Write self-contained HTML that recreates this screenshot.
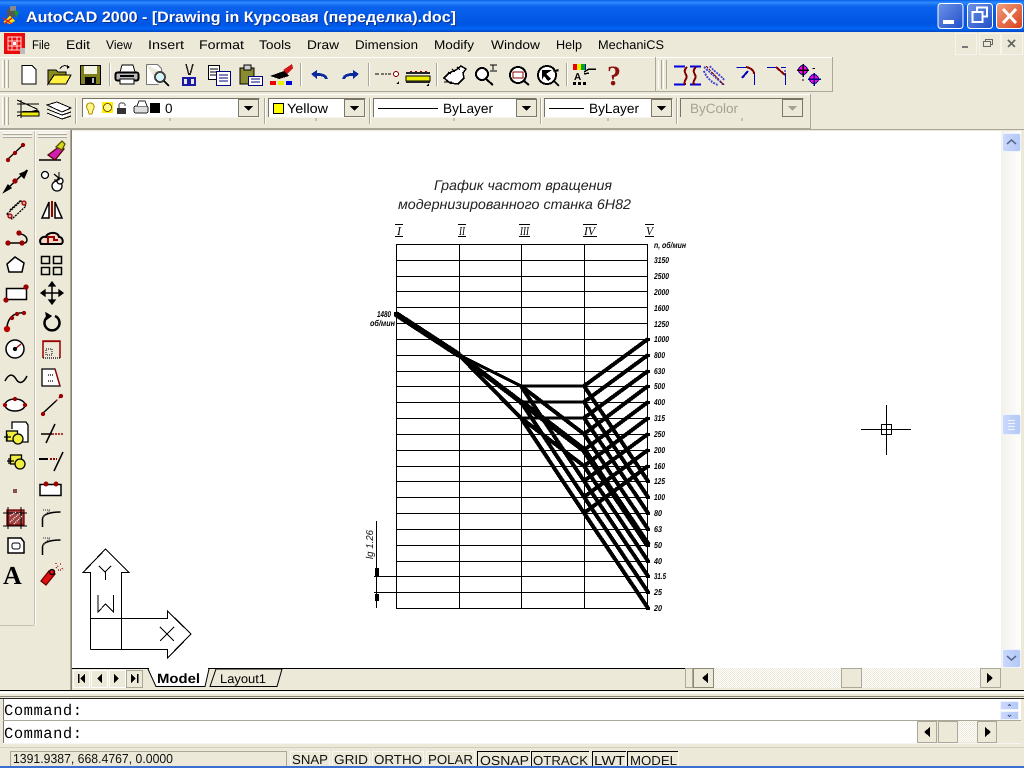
<!DOCTYPE html>
<html><head><meta charset="utf-8"><title>AutoCAD 2000</title>
<style>
html,body{margin:0;padding:0;width:1024px;height:768px;overflow:hidden;background:#ece9d8}
svg{display:block;font-family:"Liberation Sans","Noto Sans CJK SC",sans-serif;text-rendering:geometricPrecision}
.m{font-size:12.500px;fill:#000}
.c{font-size:13.500px;fill:#000}
.g{font-size:13.500px;fill:#a5a294}
.s{font-size:13px;fill:#111}
.n{font-size:8.500px;font-style:italic;font-weight:bold;fill:#000}
.t{font-size:14px;font-style:italic;fill:#222;font-weight:normal}
.r{font-family:"Liberation Serif",serif;font-size:12px;font-style:italic;fill:#000}
.l{stroke:#000;fill:none;shape-rendering:crispEdges}
</style></head><body>
<svg width="1024" height="768" viewBox="0 0 1024 768" xmlns="http://www.w3.org/2000/svg">
<defs>
<linearGradient id="tb" x1="0" y1="0" x2="0" y2="1">
<stop offset="0" stop-color="#0a5fe8"/><stop offset=".08" stop-color="#2f8cff"/><stop offset=".2" stop-color="#0a62ee"/><stop offset=".75" stop-color="#0055e3"/><stop offset=".9" stop-color="#0065f5"/><stop offset="1" stop-color="#0047c4"/></linearGradient>
<linearGradient id="bb" x1="0" y1="0" x2="1" y2="1"><stop offset="0" stop-color="#6d93e8"/><stop offset="1" stop-color="#1f4fc8"/></linearGradient>
<linearGradient id="rb" x1="0" y1="0" x2="1" y2="1"><stop offset="0" stop-color="#f0a080"/><stop offset="1" stop-color="#d8401a"/></linearGradient>
<linearGradient id="sb" x1="0" y1="0" x2="1" y2="0"><stop offset="0" stop-color="#f3f1ec"/><stop offset="1" stop-color="#fefefb"/></linearGradient>
<linearGradient id="bl" x1="0" y1="0" x2="1" y2="0"><stop offset="0" stop-color="#cbd9fb"/><stop offset="1" stop-color="#b3c8f7"/></linearGradient>
<pattern id="dz" width="2" height="2" patternUnits="userSpaceOnUse"><rect width="2" height="2" fill="#fff"/><rect width="1" height="1" fill="#ece9d8"/><rect x="1" y="1" width="1" height="1" fill="#ece9d8"/></pattern>
</defs>
<rect width="1024" height="768" fill="#ece9d8"/>

<!-- title bar -->
<rect width="1024" height="32" fill="url(#tb)"/>
<g shape-rendering="crispEdges">
<rect x="7" y="9" width="8" height="8" fill="#555"/><rect x="10" y="6" width="6" height="5" fill="#888"/>
<path d="M3 22l7-6 5 5-5 3z" fill="#ffe000"/><path d="M14 10l5 2-3 6z" fill="#1a9a2a"/><path d="M3 18l9 6M12 18l-8 6" stroke="#e02020" stroke-width="1.500" fill="none"/>
</g>
<text x="27" y="23" font-size="15" font-weight="bold" fill="#0a2f90" textLength="430" lengthAdjust="spacingAndGlyphs">AutoCAD 2000 - [Drawing in Курсовая (переделка).doc]</text>
<text x="26" y="22" font-size="15" font-weight="bold" fill="#fff" textLength="430" lengthAdjust="spacingAndGlyphs">AutoCAD 2000 - [Drawing in Курсовая (переделка).doc]</text>
<rect x="938" y="3.500" width="25" height="25" rx="3" fill="url(#bb)" stroke="#fff"/>
<rect x="943" y="20" width="11" height="4" fill="#fff"/>
<rect x="967.500" y="3.500" width="25" height="25" rx="3" fill="url(#bb)" stroke="#fff"/>
<path d="M977 11v-3.500h10v9h-3.500" fill="none" stroke="#fff" stroke-width="2"/><rect x="972.500" y="12" width="10" height="10" fill="none" stroke="#fff" stroke-width="2"/>
<rect x="996.500" y="3.500" width="26" height="25" rx="3" fill="url(#rb)" stroke="#fff"/>
<path d="M1003 9l13 14M1016 9l-13 14" stroke="#fff" stroke-width="3" fill="none"/>

<!-- menu -->
<g shape-rendering="crispEdges">
<rect x="4" y="33" width="21" height="21" fill="#ea0a0a"/>
<path d="M8 37h13v13H8zM12 37v13M17 37v13M8 41h13M8 46h13" stroke="#ffd8d8" fill="none"/>
<rect x="13" y="42" width="3" height="3" fill="#fff"/><rect x="20" y="48" width="5" height="6" fill="#bbb"/>
</g>
<text class="m" x="32" y="49" textLength="18" lengthAdjust="spacingAndGlyphs">File</text>
<text class="m" x="66" y="49" textLength="24" lengthAdjust="spacingAndGlyphs">Edit</text>
<text class="m" x="106" y="49" textLength="26" lengthAdjust="spacingAndGlyphs">View</text>
<text class="m" x="148" y="49" textLength="36" lengthAdjust="spacingAndGlyphs">Insert</text>
<text class="m" x="199" y="49" textLength="45" lengthAdjust="spacingAndGlyphs">Format</text>
<text class="m" x="259" y="49" textLength="32" lengthAdjust="spacingAndGlyphs">Tools</text>
<text class="m" x="307" y="49" textLength="32" lengthAdjust="spacingAndGlyphs">Draw</text>
<text class="m" x="355" y="49" textLength="63" lengthAdjust="spacingAndGlyphs">Dimension</text>
<text class="m" x="434" y="49" textLength="40" lengthAdjust="spacingAndGlyphs">Modify</text>
<text class="m" x="491" y="49" textLength="49" lengthAdjust="spacingAndGlyphs">Window</text>
<text class="m" x="556" y="49" textLength="26" lengthAdjust="spacingAndGlyphs">Help</text>
<text class="m" x="598" y="49" textLength="66" lengthAdjust="spacingAndGlyphs">MechaniCS</text>
<g shape-rendering="crispEdges">
<rect x="955.500" y="33.500" width="21" height="21" fill="#ece9d8" stroke="#f6f4ec"/><rect x="962" y="46" width="6" height="2" fill="#777"/>
<rect x="979.500" y="33.500" width="21" height="21" fill="#ece9d8" stroke="#f6f4ec"/><path d="M985.500 41.500v-2h7v5h-2M983.500 41.500h7v5h-7z" fill="none" stroke="#666"/>
<rect x="1001.500" y="33.500" width="21" height="21" fill="#ece9d8" stroke="#f6f4ec"/><path d="M1008 40l7 7M1015 40l-7 7" stroke="#666" stroke-width="2"/>
</g>

<!-- toolbar frames -->
<g shape-rendering="crispEdges" fill="none">
<path d="M0 57.500H655M0 94.500H810" stroke="#fff"/>
<path d="M655.500 57v35M0 91.500H655M810.500 94v35M0 128.500H810" stroke="#a9a797"/>
<path d="M656 57.500H833" stroke="#fff"/><path d="M832.500 57v35M655 91.500H833" stroke="#a9a797"/>
<path d="M2.500 60v28M6.500 60v28M2.500 97v28M6.500 97v28" stroke="#fff"/><path d="M4.500 60v28M8.500 60v28M4.500 97v28M8.500 97v28" stroke="#a9a797"/>
<path d="M658.500 60v29M663.500 60v29" stroke="#fff"/><path d="M661.500 60v29M666.500 60v29" stroke="#a9a797"/>
<path d="M109.500 63v23M300.500 63v23M368.500 63v23M436.500 63v23M566.500 63v23" stroke="#a9a797"/>
<path d="M110.500 63v23M301.500 63v23M369.500 63v23M437.500 63v23M567.500 63v23" stroke="#fff"/>
<path d="M75.500 98v26M264.500 98v26M369.500 98v26M540.500 98v26M676.500 98v26" stroke="#a9a797"/>
<path d="M76.500 98v26M265.500 98v26M370.500 98v26M541.500 98v26M677.500 98v26" stroke="#fff"/>
<path d="M0 129.500H1024" stroke="#aca899"/>
</g>

<!-- toolbar1 icons -->
<g shape-rendering="crispEdges">
<path d="M22 65.500h10l4 4v14.500H22z" fill="#fff" stroke="#000"/>
<path d="M48 84V70h8l2 2h8v3H54l-6 9z" fill="#8a8a20" stroke="#000"/><path d="M48 84l6-9h17l-5 9z" fill="#ffef40" stroke="#000"/><path d="M60 69c2-4 6-4 9-2" fill="none" stroke="#000"/><path d="M67 65l3 2-3 2z"/>
<rect x="80.500" y="65.500" width="20" height="19" fill="#7f7f20" stroke="#000"/><rect x="84" y="66" width="13" height="8" fill="#f2f2e0"/><rect x="85" y="77" width="11" height="7" fill="#000"/><rect x="92" y="78" width="2" height="5" fill="#bbb"/>
<path d="M120 72l2-7h11l2 7" fill="#fff" stroke="#000"/><rect x="115.500" y="72.500" width="23" height="8" rx="2" fill="#bbb" stroke="#000" stroke-width="2"/><rect x="120" y="79" width="14" height="5" fill="#fff" stroke="#000"/><rect x="120" y="75" width="14" height="2" fill="#000"/>
<path d="M146.500 64.500h11l4 4v4M146.500 64.500v20h12" fill="#fff" stroke="#777"/><circle cx="160" cy="77" r="5" fill="#d5f5f8" stroke="#444" stroke-width="2"/><path d="M164 81l5 5" stroke="#000" stroke-width="2"/>
<path d="M186 64l3 11M193 64l-3 11" stroke="#222" stroke-width="1.500"/><rect x="183" y="78" width="5" height="7" fill="none" stroke="#1a1aa8" stroke-width="2"/><rect x="190" y="78" width="5" height="7" fill="none" stroke="#1a1aa8" stroke-width="2"/>
<rect x="208.500" y="65.500" width="11" height="14" fill="#fff" stroke="#000"/><path d="M210 69h8M210 72h8M210 75h8" stroke="#000"/><rect x="216.500" y="71.500" width="14" height="14" fill="#fff" stroke="#00007f"/><path d="M219 75h9M219 78h9M219 81h9" stroke="#00007f"/>
<rect x="240" y="68" width="14" height="16" fill="#8a8a30" stroke="#000"/><rect x="244" y="65" width="7" height="5" fill="#ccc" stroke="#000"/><rect x="248.500" y="76.500" width="14" height="9" fill="#fff" stroke="#00007f"/><path d="M251 79h9M251 82h9" stroke="#00007f"/>
<path d="M270 76l14-5 5 5-10 3z"/><path d="M283 70l9-6 1 4-6 6z" fill="#d01818"/><rect x="270" y="81" width="6" height="4" fill="#e00"/><rect x="278" y="81" width="6" height="4" fill="#ee0"/><rect x="286" y="81" width="6" height="4" fill="#00d"/>
<path d="M311 74l6-4v3c5 0 10 1 11 6h-3c-1-3-4-3-8-3v3z" fill="#0a2aa0"/>
<path d="M359 74l-6-4v3c-5 0-10 1-11 6h3c1-3 4-3 8-3v3z" fill="#0a2aa0"/>
<path d="M375 74h4M381 74h3M385 74h2M388 74h3" stroke="#000"/><circle cx="396" cy="74" r="2.500" fill="#fff" stroke="#900"/><path d="M396 84h3v-3z"/>
<rect x="406" y="72" width="24" height="2" fill="#222"/><path d="M410 71.500h2M415 71.500h2M420 71.500h2M425 71.500h2" stroke="#900"/><rect x="406" y="76" width="24" height="5" fill="#ee0" stroke="#000"/><rect x="406" y="81" width="24" height="2" fill="#222"/><path d="M426 86h3v-3z"/>
<path d="M444 78l5-5 7-3 5-4 5 3-3 4 1 5-6 6-8-1z" fill="#fff" stroke="#000" stroke-width="1.500"/><path d="M448 72l3 2M452 69l3 3M457 67l3 3M444 82h8" stroke="#000"/>
<circle cx="482" cy="74" r="6" fill="#fff" stroke="#000" stroke-width="2"/><path d="M486 79l7 6" stroke="#000" stroke-width="2"/><path d="M490 71h7M493 65v5M490 65h7" stroke="#000"/>
<circle cx="518" cy="75" r="8" fill="#fff" stroke="#000" stroke-width="2"/><rect x="513" y="72" width="10" height="6" fill="none" stroke="#800"/><path d="M524 81l5 4" stroke="#000" stroke-width="2"/>
<circle cx="547" cy="75" r="9" fill="#fff" stroke="#000" stroke-width="2"/><path d="M542 70h10l-6 4 5 5-3 2-4-5-2 4z"/><path d="M554 81l5 5" stroke="#000" stroke-width="2"/><path d="M553 71h5v-2" stroke="#000"/>
<rect x="573" y="64" width="4" height="6" fill="#e00"/><rect x="577" y="64" width="4" height="6" fill="#ee0"/><rect x="581" y="64" width="4" height="6" fill="#0a0"/><rect x="585" y="64" width="1" height="6" fill="#00d"/><text x="574" y="80" font-size="10" font-weight="bold" fill="#000">A</text><path d="M584 72l5-3h7M584 74l5-1" stroke="#000" stroke-width="1.500" fill="none"/><rect x="573" y="82" width="3" height="3"/><rect x="578" y="82" width="3" height="3"/><rect x="583" y="82" width="3" height="3"/>
<text x="607" y="85" font-size="28" font-weight="bold" fill="#8a1010" font-family="Liberation Serif">?</text>
</g>
<!-- mechanics icons -->
<g shape-rendering="crispEdges" fill="none">
<path d="M674 66.500h11M674 84.500h11M690 66.500h11M690 84.500h11" stroke="#0000e0" stroke-width="2"/>
<path d="M687 67c-6 6 2 7-1 12s-1 5 0 5M696 67c-6 6 2 7-1 12s-1 5 0 5" stroke="#800000" stroke-width="2"/>
<path d="M704 67l20 18M710 66c3 5 12 10 14 14M704 71c2 6 8 12 14 14" stroke="#4a4ad8" stroke-width="2" stroke-dasharray="2 1"/>
<path d="M706 66l18 19" stroke="#800000" stroke-dasharray="3 1"/>
<path d="M736.500 67.500h10M754.500 85v-12" stroke="#0000c0"/><path d="M746 67c5 1 8 3 8 7" stroke="#800000" stroke-width="2"/><path d="M742 78l6-7" stroke="#0000c0" stroke-width="2"/>
<path d="M767 67.500h10M785.500 85v-12" stroke="#0000c0"/><path d="M776 67l9 8" stroke="#800000" stroke-width="2"/><path d="M781 67.500h5M785 70v2" stroke="#0000c0"/>
<circle cx="803" cy="70" r="4.500" fill="#ff00e0" stroke="#000080"/><path d="M803 64v13M797 70h12" stroke="#000" stroke-width="1.500"/>
<circle cx="814" cy="79" r="4.500" fill="#ff00e0" stroke="#000080"/><path d="M814 73v13M808 79h13" stroke="#00008a" stroke-width="1.500"/>
<path d="M813 68.500h2M813 68v1M802 80h2" stroke="#000"/>
</g>

<!-- toolbar2 -->
<g shape-rendering="crispEdges">
<path d="M17 100l20 9v1l-20 6M17 104h22M17 112l22-1M21 100v18" fill="none" stroke="#000"/><rect x="21" y="112" width="18" height="4" fill="#eeea10" stroke="#000"/>
<path d="M47 105l10-3 14 6-9 4zM47 109l15 6 9-3M47 113l15 6 9-3" fill="#fff" stroke="#000"/>
</g>
<g shape-rendering="crispEdges">
<g fill="#fff">
<rect x="82.500" y="98.500" width="177" height="19"/><rect x="268.500" y="98.500" width="97" height="19"/><rect x="373.500" y="98.500" width="163" height="19"/><rect x="544.500" y="98.500" width="128" height="19"/>
</g>
<rect x="680.500" y="98.500" width="123" height="19" fill="#ece9d8"/>
<g fill="none" stroke="#777467">
<path d="M82.500 117V98.500H259.500"/><path d="M268.500 117V98.500H365.500"/><path d="M373.500 117V98.500H536.500"/><path d="M544.500 117V98.500H672.500"/><path d="M680.500 117V98.500H803.500"/>
</g>
<g fill="#ece9d8" stroke="#7a7868">
<rect x="238.500" y="99.500" width="20" height="17"/><rect x="344.500" y="99.500" width="20" height="17"/><rect x="516.500" y="99.500" width="20" height="17"/><rect x="651.500" y="99.500" width="20" height="17"/><rect x="782.500" y="99.500" width="20" height="17"/>
</g>
<path d="M244 106h9l-4.500 5zM350 106h9l-4.500 5zM522 106h9l-4.500 5zM657 106h9l-4.500 5z"/>
<path d="M788 106h9l-4.500 5z" fill="#a5a294"/>
<path d="M170 118v3M316 118v3M454 118v3M608 118v3M742 118v3" stroke="#999"/>
<path d="M90 103c-4 0-4 5-2 7l1 4h3l1-4c2-2 2-7-3-7z" fill="#fff58a" stroke="#b09000"/>
<rect x="102" y="102" width="11" height="11" fill="#fff000"/><circle cx="107.500" cy="107.500" r="4" fill="#fff88a" stroke="#806000"/>
<rect x="117" y="108" width="9" height="6" fill="#333"/><path d="M119 108v-3c0-3 6-3 6 0v1" fill="none" stroke="#333"/>
<rect x="134" y="106" width="14" height="7" rx="2" fill="#ddd" stroke="#222"/><path d="M137 106l2-5h6l2 5" fill="#fff" stroke="#222"/>
<rect x="150" y="103" width="10" height="10"/>
<text class="c" x="165" y="113">0</text>
<rect x="273.500" y="103.500" width="10" height="10" fill="#ff0" stroke="#000"/>
<text class="c" x="287" y="113" textLength="41" lengthAdjust="spacingAndGlyphs">Yellow</text>
<path d="M378 108.500h60M549 108.500h35" stroke="#000"/>
<text class="c" x="443" y="113" textLength="50" lengthAdjust="spacingAndGlyphs">ByLayer</text>
<text class="c" x="589" y="113" textLength="50" lengthAdjust="spacingAndGlyphs">ByLayer</text>
<text class="g" x="690" y="113" textLength="48" lengthAdjust="spacingAndGlyphs">ByColor</text>
</g>

<!-- left palette -->
<g shape-rendering="crispEdges">
<path d="M0 625.500H34M34.500 130V625" stroke="#c5c2b0" fill="none"/>
<path d="M70.500 130V690" stroke="#aca899" fill="none"/>
<path d="M35.500 130V625M0 130.500H70" stroke="#fff" fill="none"/>
<rect x="3" y="132" width="29" height="2" fill="#f7f6f0"/><rect x="3" y="134" width="29" height="1" fill="#aca899"/><rect x="3" y="136" width="29" height="1" fill="#f7f6f0"/><rect x="3" y="137" width="29" height="1" fill="#aca899"/>
<rect x="38" y="132" width="29" height="2" fill="#f7f6f0"/><rect x="38" y="134" width="29" height="1" fill="#aca899"/><rect x="38" y="136" width="29" height="1" fill="#f7f6f0"/><rect x="38" y="137" width="29" height="1" fill="#aca899"/>
<rect x="71" y="130" width="1" height="560" fill="#85836f"/>
</g>
<g fill="none" stroke="#000" stroke-width="1.300">
<path d="M7 160l16-15"/><circle cx="8" cy="160" r="1.500" fill="#900" stroke="#900"/><circle cx="15" cy="153" r="1.500" fill="#900" stroke="#900"/><circle cx="23" cy="145" r="1.500" fill="#900" stroke="#900"/>
<path d="M5 191l22-21" stroke-width="1.500"/><path d="M4 192l4-7 3 3zM27 171l-3 7-4-4z" fill="#000"/><circle cx="15" cy="181" r="2" fill="#900" stroke="#900"/>
<path d="M7 214l14-13 5 5-14 13zM10 210l11-10" stroke-dasharray="2 1"/><circle cx="10" cy="216" r="2" fill="#e8a0a0" stroke="#900"/><circle cx="24" cy="203" r="2" fill="#e8a0a0" stroke="#900"/>
<path d="M7 243h17c5 0 4-9-5-9" stroke-width="1.500"/><circle cx="8" cy="243" r="2" fill="#900" stroke="#900"/><circle cx="22" cy="243" r="2" fill="#900" stroke="#900"/><circle cx="19" cy="233" r="2" fill="#900" stroke="#900"/>
<path d="M15 257l9 6-2 9H9l-2-8z" fill="#fff" stroke-width="1.500"/>
<rect x="6.500" y="288.500" width="20" height="11" fill="#fff" stroke-width="1.500"/><circle cx="26" cy="287" r="2" fill="#900" stroke="#900"/><circle cx="6" cy="300" r="2" fill="#900" stroke="#900"/>
<path d="M7 327c1-10 8-15 17-14" stroke-width="1.500"/><circle cx="7" cy="329" r="2.500" fill="#b00" stroke="#b00"/><circle cx="12" cy="318" r="1.500" fill="#900" stroke="#900"/><circle cx="17" cy="314" r="1.500" fill="#900" stroke="#900"/><circle cx="24" cy="313" r="1.500" fill="#900" stroke="#900"/>
<circle cx="15" cy="349" r="9" fill="#fff" stroke-width="1.500"/><path d="M15 349l6-5" stroke="#900"/><circle cx="15" cy="349" r="1.500" fill="#000"/>
<path d="M5 381c4-8 8-7 11-2s7 5 11-3" stroke-width="1.500"/>
<ellipse cx="15" cy="405" rx="10" ry="6" fill="#fff" stroke-width="1.500"/><circle cx="5" cy="405" r="1.500" fill="#900" stroke="#900"/><circle cx="25" cy="405" r="1.500" fill="#900" stroke="#900"/><circle cx="15" cy="399" r="1.500" fill="#900" stroke="#900"/>
<path d="M12 429v-7h14l2 3v17h-6" fill="#fff"/><rect x="6.500" y="431" width="11" height="10" fill="#f0ee40" stroke="#000"/><circle cx="18" cy="439" r="5" fill="#f0ee40"/><path d="M4 437h7M7 434v7"/>
<rect x="10.500" y="455" width="11" height="9" fill="#f0ee40"/><circle cx="20" cy="464" r="5" fill="#f0ee40"/><path d="M7 461h7M9 458v6"/>
<rect x="13" y="489" width="4" height="4" fill="#8a5050" stroke="none"/>
<rect x="7" y="510" width="17" height="15" fill="#a04040" stroke="#700"/><path d="M3 513h24M3 526h24M8 507v22M21 507v22" stroke-width="1"/><path d="M10 522l10-9M10 516l6-4M14 524l8-8" stroke="#fff" stroke-dasharray="1 1"/>
<path d="M8 538h13l3 4v11H8z" fill="#fff" stroke-width="1.500"/><rect x="12" y="543" width="8" height="6" rx="2" stroke-width="1"/>
</g>
<text x="3" y="584" font-size="26" font-weight="bold" font-family="Liberation Serif" fill="#000">A</text>
<g fill="none" stroke="#000" stroke-width="1.300">
<path d="M39 160h22" stroke-width="1.500"/><path d="M48 155l12-9 4 3-9 11z" fill="#d020b0" stroke="#500"/><path d="M56 147l6-6 3 3-3 6z" fill="#d8d820" stroke="#550"/>
<circle cx="45" cy="175" r="3.500" fill="#fff"/><circle cx="57" cy="186" r="5" fill="#fff"/><circle cx="60" cy="181" r="3" fill="#fff"/><path d="M54 174l6 5"/><path d="M59 172v8h-5" stroke-width="1"/>
<path d="M52 201v16" stroke="#900" stroke-width="2"/><path d="M49 202v16h-7zM55 202v16h7z" fill="#fff" stroke-width="1.500"/>
<path d="M41 244c-3-5 2-8 5-7 1-5 12-6 13 0 4 0 5 6 2 7z" stroke-width="2" fill="#f2d8c8"/><path d="M48 243v-6h6v3h4" stroke="#900" stroke-width="2"/>
<rect x="41.500" y="256.500" width="8" height="7" stroke-width="1.500"/><rect x="53.500" y="256.500" width="8" height="7" stroke-width="1.500"/><rect x="41.500" y="267.500" width="8" height="7" stroke-width="1.500"/><rect x="53.500" y="267.500" width="8" height="7" stroke-width="1.500"/>
<path d="M52 283v20M42 293h20" stroke-width="1.500"/><path d="M52 282l-3 4h6zM52 304l-3-4h6zM41 293l4-3v6zM63 293l-4-3v6z" fill="#000"/>
<path d="M49 316a7.500 7.500 0 1 0 6 0" stroke-width="2.500"/><path d="M46 313l5 3-4 3z" fill="#000"/>
<path d="M43 358v-17h17v17" stroke="#900" stroke-width="1.500"/><path d="M43.500 341.500h17" stroke="#900"/><path d="M46 349h6v6h-6z" stroke-width="1" stroke-dasharray="1 1"/><path d="M43 358h17" stroke="#000" stroke-dasharray="1 1"/>
<path d="M42 369v17h18l-5-17z" fill="#fff"/><path d="M55 369l5 17" stroke="#900"/><path d="M48 375h5M48 381h5" stroke-dasharray="1 1"/>
<path d="M42 414l14-13" stroke-width="1.500"/><path d="M56 401l6-6" stroke="#900" stroke-dasharray="2 2"/><circle cx="43" cy="414" r="1.500" fill="#900" stroke="#900"/><circle cx="61" cy="396" r="1.500" fill="#900" stroke="#900"/>
<path d="M46 443l9-19M41 434h11" stroke-width="1.500"/><path d="M52 434h11" stroke="#900" stroke-dasharray="2 1" stroke-width="1.500"/>
<path d="M39 459h9" stroke-width="2"/><path d="M50 459h7" stroke="#900" stroke-dasharray="2 1" stroke-width="2"/><path d="M54 471l9-19" stroke-width="1.500"/>
<rect x="40" y="484.500" width="21" height="11" fill="#fff" stroke-width="1.500"/><circle cx="46" cy="484" r="1.800" fill="#900" stroke="#900"/><circle cx="56" cy="484" r="1.800" fill="#900" stroke="#900"/>
<path d="M42.500 527v-8c0-4 6-7 18-7" stroke-width="1.500"/><path d="M43 510h7l-7 7" stroke-dasharray="1 1" stroke="#555"/>
<path d="M42.500 555v-8c0-4 6-7 18-7" stroke-width="1.500"/><path d="M43 538h7l-7 7" stroke-dasharray="1 1" stroke="#555"/>
<path d="M41 581l8-10 6 3-9 11z" fill="#e01010" stroke="#600"/><circle cx="52" cy="572" r="2.500" stroke="#000" fill="#e01010"/><path d="M56 568l2-2M60 564h2M58 570h3M62 568l1 2M56 564v-1" stroke="#900" stroke-dasharray="1 1"/>
</g>

<!-- canvas -->
<rect x="72" y="131" width="929" height="537" fill="#fff"/>
<!-- drawing -->
<g class="l" stroke-width="1.400">
<path d="M396.500 244V608.500M459.500 244V608.500M521.500 244V608.500M584.500 244V608.500M647.500 244V608.500"/>
<path d="M396 244.500H648M396 260.500H648M396 276.500H648M396 291.500H648M396 307.500H648M396 323.500H648M396 339.500H648M396 355.500H648M396 371.500H648M396 386.500H648M396 402.500H648M396 418.500H648M396 434.500H648M396 450.500H648M396 466.500H648M396 481.500H648M396 497.500H648M396 513.500H648M396 529.500H648M396 545.500H648M396 561.500H648M374 576.500H648M374 592.500H648M396 608.500H648"/>
</g>
<g class="l" stroke-width="4">
<path d="M396 314L459 355" stroke-width="6"/>
<path d="M459 355L521 386" stroke-width="3"/>
<path d="M459 355L521 418"/>
<path d="M459 355L521 402" stroke-width="5"/>
<path d="M521 386H584M521 402H584M521 418H584" stroke-width="3"/>
<path d="M521 386L584 434M521 386L584 481M521 402L584 497M521 418L584 466M521 418L584 513"/>
<path d="M521 402L584 450" stroke-width="6"/>
<path d="M584 386L648 339M584 402L648 355M584 418L648 371M584 434L648 386M584 450L648 402M584 466L648 418M584 481L648 434M584 497L648 450M584 513L648 466"/>
<path d="M584 386L648 481M584 402L648 497M584 418L648 513M584 434L648 529M584 450L648 545M584 466L648 561M584 481L648 576M584 497L648 592M584 513L648 608"/>
<path d="M584 450L648 545" stroke-width="6"/>
</g>
<g fill="#000" shape-rendering="crispEdges">
<rect x="646" y="338" width="4" height="3"/><rect x="646" y="354" width="4" height="3"/><rect x="646" y="370" width="4" height="3"/><rect x="646" y="385" width="4" height="3"/><rect x="646" y="401" width="4" height="3"/><rect x="646" y="417" width="4" height="3"/><rect x="646" y="433" width="4" height="3"/><rect x="646" y="449" width="4" height="3"/><rect x="646" y="465" width="4" height="3"/><rect x="646" y="480" width="4" height="3"/><rect x="646" y="496" width="4" height="3"/><rect x="646" y="512" width="4" height="3"/><rect x="646" y="528" width="4" height="3"/><rect x="646" y="544" width="4" height="3"/><rect x="646" y="560" width="4" height="3"/><rect x="646" y="575" width="4" height="3"/><rect x="646" y="591" width="4" height="3"/><rect x="646" y="607" width="4" height="3"/><rect x="394" y="312" width="3" height="4"/>
</g>
<text class="t" x="434" y="190" textLength="178" lengthAdjust="spacingAndGlyphs">График частот вращения</text>
<text class="t" x="398" y="209" textLength="233" lengthAdjust="spacingAndGlyphs">модернизированного станка 6Н82</text>
<g class="l"><path d="M395 224.500h8M395 236.500h8M458 224.500h8M458 236.500h8M519 224.500h11M519 236.500h11M583 224.500h14M583 236.500h14M645 224.500h9M645 236.500h9"/></g>
<text class="r" x="397" y="235">I</text><text class="r" x="459" y="235" textLength="6" lengthAdjust="spacingAndGlyphs">II</text><text class="r" x="520" y="235" textLength="9" lengthAdjust="spacingAndGlyphs">III</text><text class="r" x="584" y="235" textLength="11" lengthAdjust="spacingAndGlyphs">IV</text><text class="r" x="646" y="235" textLength="7" lengthAdjust="spacingAndGlyphs">V</text>
<g>
<text class="n" x="654" y="248" textLength="32" lengthAdjust="spacingAndGlyphs">n, об/мин</text>
<text class="n" x="654" y="263" textLength="15" lengthAdjust="spacingAndGlyphs">3150</text>
<text class="n" x="654" y="279" textLength="15" lengthAdjust="spacingAndGlyphs">2500</text>
<text class="n" x="654" y="295" textLength="15" lengthAdjust="spacingAndGlyphs">2000</text>
<text class="n" x="654" y="311" textLength="15" lengthAdjust="spacingAndGlyphs">1600</text>
<text class="n" x="654" y="327" textLength="15" lengthAdjust="spacingAndGlyphs">1250</text>
<text class="n" x="654" y="342" textLength="15" lengthAdjust="spacingAndGlyphs">1000</text>
<text class="n" x="654" y="358" textLength="11" lengthAdjust="spacingAndGlyphs">800</text>
<text class="n" x="654" y="374" textLength="11" lengthAdjust="spacingAndGlyphs">630</text>
<text class="n" x="654" y="389" textLength="11" lengthAdjust="spacingAndGlyphs">500</text>
<text class="n" x="654" y="405" textLength="11" lengthAdjust="spacingAndGlyphs">400</text>
<text class="n" x="654" y="421" textLength="11" lengthAdjust="spacingAndGlyphs">315</text>
<text class="n" x="654" y="437" textLength="11" lengthAdjust="spacingAndGlyphs">250</text>
<text class="n" x="654" y="453" textLength="11" lengthAdjust="spacingAndGlyphs">200</text>
<text class="n" x="654" y="469" textLength="11" lengthAdjust="spacingAndGlyphs">160</text>
<text class="n" x="654" y="484" textLength="11" lengthAdjust="spacingAndGlyphs">125</text>
<text class="n" x="654" y="500" textLength="11" lengthAdjust="spacingAndGlyphs">100</text>
<text class="n" x="654" y="516" textLength="8" lengthAdjust="spacingAndGlyphs">80</text>
<text class="n" x="654" y="532" textLength="8" lengthAdjust="spacingAndGlyphs">63</text>
<text class="n" x="654" y="548" textLength="8" lengthAdjust="spacingAndGlyphs">50</text>
<text class="n" x="654" y="564" textLength="8" lengthAdjust="spacingAndGlyphs">40</text>
<text class="n" x="654" y="579" textLength="12" lengthAdjust="spacingAndGlyphs">31.5</text>
<text class="n" x="654" y="595" textLength="8" lengthAdjust="spacingAndGlyphs">25</text>
<text class="n" x="654" y="611" textLength="8" lengthAdjust="spacingAndGlyphs">20</text>
<text class="n" x="377" y="317" textLength="14" lengthAdjust="spacingAndGlyphs">1480</text>
<text class="n" x="370" y="326" textLength="25" lengthAdjust="spacingAndGlyphs">об/мин</text>
<text font-size="10" font-style="italic" fill="#111" transform="translate(373,559) rotate(-90)" textLength="29" lengthAdjust="spacingAndGlyphs">lg 1.26</text>
</g>
<g class="l"><path d="M376.500 521V608"/></g>
<path d="M375 568h4v8h-4zM375 594h4v7h-4z" fill="#000" shape-rendering="crispEdges"/>

<!-- UCS -->
<g class="l" stroke-width="1.200">
<path d="M90.500 649.500V572.500H83L105.500 549L129 572.500H121.500V649.500M90.500 649.500H167.500V658L191 634L167.500 611V618.500H90.500M121.500 618.500V649.500"/>
<path d="M99 566l6 6 6-6M105.500 572v8M98 595v17l7.500-8 8 8v-17M160 627l14 14M174 627l-14 14" stroke-width="1"/>
</g>
<!-- crosshair -->
<g class="l" stroke-width="1.300"><path d="M861 429.500H911M886.500 405V455"/><rect x="881.500" y="424.500" width="10" height="10"/></g>

<!-- right scrollbar -->
<rect x="1001" y="131" width="20" height="537" fill="url(#sb)"/>
<rect x="1021" y="131" width="3" height="537" fill="#ece9d8"/>
<rect x="1002.500" y="133.500" width="18" height="18" rx="2" fill="url(#bl)" stroke="#eef3ff"/>
<path d="M1007 144l4.500-4 4.500 4" fill="none" stroke="#4d6185" stroke-width="1.500"/>
<rect x="1002.500" y="414.500" width="18" height="20" rx="2" fill="url(#bl)" stroke="#eef3ff"/>
<path d="M1008 420.500h7M1008 423.500h7M1008 426.500h7M1008 429.500h7" stroke="#eef3ff" shape-rendering="crispEdges"/>
<rect x="1002.500" y="649.500" width="18" height="18" rx="2" fill="url(#bl)" stroke="#eef3ff"/>
<path d="M1007 656l4.500 4 4.500-4" fill="none" stroke="#4d6185" stroke-width="1.500"/>

<!-- tab bar -->
<rect x="72" y="669" width="952" height="21" fill="#ece9d8"/>
<g shape-rendering="crispEdges">
<path d="M72 668.500H685" stroke="#000"/>
<rect x="73.500" y="670.500" width="16" height="17" fill="#ece9d8" stroke="#fff"/><rect x="91.500" y="670.500" width="16" height="17" fill="#ece9d8" stroke="#fff"/><rect x="109.500" y="670.500" width="16" height="17" fill="#ece9d8" stroke="#fff"/><rect x="126.500" y="670.500" width="16" height="17" fill="#ece9d8" stroke="#aca899"/>
<path d="M78.500 674v9" stroke="#000" stroke-width="1.500"/><path d="M85 674v9l-5-4.500zM102 674v9l-5-4.500zM114 674v9l5-4.500zM131 674v9l5-4.500z"/><path d="M137.500 674v9" stroke="#000" stroke-width="1.500"/>
</g>
<path d="M148 669l8 17.500h49l4-17.500" fill="#fff" stroke="#000"/>
<path d="M210 686.500l6-17.500h66l-5 17.500z" fill="#ece9d8" stroke="#000"/>
<rect x="149" y="667.500" width="59" height="2" fill="#fff"/>
<text x="157" y="683" font-size="13.500" font-weight="bold" fill="#000" textLength="43" lengthAdjust="spacingAndGlyphs">Model</text>
<text x="220" y="683" font-size="12.500" fill="#000" textLength="46" lengthAdjust="spacingAndGlyphs">Layout1</text>
<!-- hscroll -->
<rect x="714" y="668" width="266" height="20" fill="url(#dz)"/>
<g shape-rendering="crispEdges">
<rect x="685.500" y="668.500" width="7" height="19" fill="#ece9d8" stroke="#aca899"/>
<rect x="693.500" y="668.500" width="20" height="19" fill="#ece9d8" stroke="#8a8875"/>
<path d="M708 673v10l-6-5z"/>
<rect x="841.500" y="668.500" width="20" height="19" fill="#ece9d8" stroke="#aca899"/>
<rect x="980.500" y="668.500" width="20" height="19" fill="#ece9d8" stroke="#aca899"/>
<path d="M987 673v10l6-5z"/>
<path d="M0 690.500H1024" stroke="#000"/><path d="M0 692.500H1024" stroke="#fff" stroke-width="2"/>
<path d="M0 696.500H1024" stroke="#8a8875"/><path d="M0 698.500H1024" stroke="#222"/>
</g>
<!-- command area -->
<rect x="3" y="699" width="1018" height="44" fill="#fff"/>
<g shape-rendering="crispEdges">
<path d="M3.500 699V743" stroke="#777"/><path d="M3 720.500H1021" stroke="#aca899"/><path d="M3 743.500H1021" stroke="#f6f5ef"/><path d="M0 747.500H1024" stroke="#d0cebf"/>
<rect x="917" y="721" width="107" height="22" fill="#ece9d8"/>
<rect x="957" y="721" width="20" height="21" fill="url(#dz)"/>
<rect x="917.500" y="721.500" width="19" height="21" fill="#ece9d8" stroke="#aca899"/><rect x="938.500" y="721.500" width="19" height="21" fill="#ece9d8" stroke="#aca899"/><rect x="977.500" y="721.500" width="19" height="21" fill="#ece9d8" stroke="#aca899"/>
<path d="M930 727v10l-6-5zM985 727v10l6-5z"/>
<rect x="1000.500" y="701.500" width="18" height="8" fill="url(#bl)" stroke="#eef3ff"/><rect x="1000.500" y="711.500" width="18" height="8" fill="url(#bl)" stroke="#eef3ff"/>
<path d="M1008 706l1.500-1.500 1.500 1.500M1008 715l1.500 1.500 1.500-1.500" stroke="#4d6185" fill="none"/>
</g>
<text x="4" y="715" font-family="Liberation Mono" font-size="15.500" fill="#000" textLength="78" lengthAdjust="spacing">Command:</text>
<text x="4" y="738" font-family="Liberation Mono" font-size="15.500" fill="#000" textLength="78" lengthAdjust="spacing">Command:</text>

<!-- status bar -->
<g shape-rendering="crispEdges" fill="none">
<rect x="10.500" y="751.500" width="276" height="16" stroke="#aca899"/>
<rect x="290.500" y="751.500" width="39" height="16" stroke="#f8f7f2"/>
<rect x="332.500" y="751.500" width="37" height="16" stroke="#f8f7f2"/>
<rect x="372.500" y="751.500" width="51" height="16" stroke="#f8f7f2"/>
<rect x="426.500" y="751.500" width="48" height="16" stroke="#f8f7f2"/>
<path d="M477.500 768V751.500H530" stroke="#000"/><path d="M531.500 768V751.500H589" stroke="#000"/><path d="M592.500 768V751.500H626" stroke="#000"/><path d="M627.500 768V751.500H678" stroke="#000"/>
<path d="M530.500 752V768M589.500 752V768M625.500 752V768M678.500 752V768" stroke="#f8f7f2"/>
</g>
<text class="s" x="13" y="763" textLength="160" lengthAdjust="spacingAndGlyphs">1391.9387, 668.4767, 0.0000</text>
<text class="s" x="292" y="764" textLength="36" lengthAdjust="spacingAndGlyphs">SNAP</text>
<text class="s" x="334" y="764" textLength="34" lengthAdjust="spacingAndGlyphs">GRID</text>
<text class="s" x="374" y="764" textLength="48" lengthAdjust="spacingAndGlyphs">ORTHO</text>
<text class="s" x="428" y="764" textLength="45" lengthAdjust="spacingAndGlyphs">POLAR</text>
<text class="s" x="480" y="765" textLength="49" lengthAdjust="spacingAndGlyphs">OSNAP</text>
<text class="s" x="533" y="765" textLength="55" lengthAdjust="spacingAndGlyphs">OTRACK</text>
<text class="s" x="594" y="765" textLength="31" lengthAdjust="spacingAndGlyphs">LWT</text>
<text class="s" x="630" y="765" textLength="47" lengthAdjust="spacingAndGlyphs">MODEL</text>
<rect x="0" y="766" width="1024" height="2" fill="#3a6ed0"/>
</svg>
</body></html>
